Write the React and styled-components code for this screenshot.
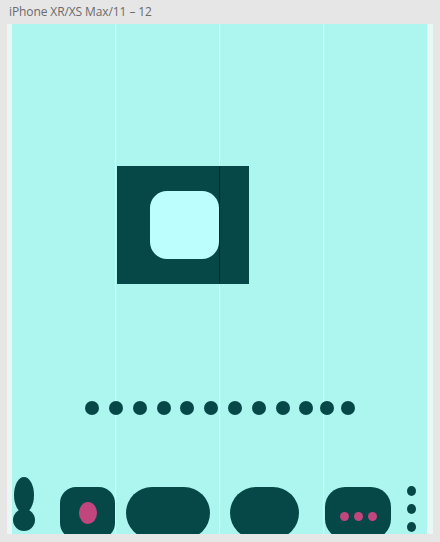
import React from 'react';
import styled, { createGlobalStyle } from 'styled-components';

const GlobalStyle = createGlobalStyle`
  html, body {
    margin: 0;
    padding: 0;
    background: #e6e6e6;
  }
  body {
    font-family: "Open Sans", "Noto Sans", sans-serif;
  }
`;

const DARK = '#064848';
const PINK = '#c1467d';

const Frame = styled.div`
  width: 440px;
  height: 542px;
  display: flex;
  flex-direction: column;
  background: #e6e6e6;
  overflow: hidden;
`;

const Title = styled.div`
  height: 24px;
  padding-left: 9px;
  font-size: 12px;
  line-height: 23px;
  color: #6b6b6b;
  letter-spacing: -0.1px;
`;

const Artboard = styled.div`
  margin: 0 7px;
  height: 510px;
  display: flex;
  background: #eaf7f5;
  padding: 0 6px 0 5px;
`;

const Canvas = styled.div`
  position: relative;
  flex: 1;
  background: #adf5ef;
  overflow: hidden;
  display: flex;
  flex-direction: column;
`;

const GridLine = styled.div`
  position: absolute;
  top: 0;
  bottom: 0;
  width: 1px;
  background: #e4fdfb;
  z-index: 0;
`;

const Layer = styled.div`
  position: relative;
  z-index: 1;
  display: flex;
  flex-direction: column;
`;

const Hero = styled.div`
  margin: 142px 0 0 105px;
  width: 132px;
  height: 118px;
  background: ${DARK};
  display: flex;
`;

const HeroLeft = styled.div`
  width: 102px;
  display: flex;
  align-items: center;
  justify-content: flex-end;
`;

const HeroDivider = styled.div`
  width: 1px;
  background: #0b1f1f;
`;

const Tile = styled.div`
  width: 69px;
  height: 68px;
  border-radius: 17px;
  background: #bcfdfd;
`;

const DotRow = styled.div`
  margin: 117px 0 0 63px;
  display: flex;
`;

const Dot = styled.div`
  width: 14px;
  height: 14px;
  margin-left: ${(p) => p.$gap}px;
  border-radius: 50%;
  background: ${DARK};
`;

const BottomBar = styled.div`
  margin-top: 62px;
  display: flex;
  align-items: flex-start;
`;

const Slot = styled.div`
  margin-left: ${(p) => p.$left}px;
  margin-top: ${(p) => p.$top || 0}px;
`;

const Stack = styled.div`
  display: flex;
  flex-direction: column;
  align-items: center;
  width: 22px;
`;

const Oval = styled.div`
  width: ${(p) => p.$w}px;
  height: ${(p) => p.$h}px;
  border-radius: 50%;
  background: ${(p) => p.$color || DARK};
  margin-top: ${(p) => p.$top || 0}px;
`;

const Block = styled.div`
  width: ${(p) => p.$w}px;
  height: 52px;
  border-radius: ${(p) => p.$radius}px;
  background: ${DARK};
  display: flex;
  justify-content: center;
  align-items: ${(p) => (p.$low ? 'flex-start' : 'center')};
  padding-top: ${(p) => (p.$low ? 25 : 0)}px;
  box-sizing: border-box;
  gap: 5px;
`;

const VDots = styled.div`
  display: flex;
  flex-direction: column;
  gap: 8px;
`;

const dotGaps = [10, 10, 10, 9.5, 9.5, 10, 10, 10, 9.5, 9.5, 6.5, 7];

export default function App() {
  return (
    <Frame>
      <GlobalStyle />
      <Title>iPhone XR/XS Max/11 – 12</Title>
      <Artboard>
        <Canvas>
          <GridLine style={{ left: 103 }} />
          <GridLine style={{ left: 207 }} />
          <GridLine style={{ left: 311 }} />
          <Layer>
            <Hero>
              <HeroLeft>
                <Tile />
              </HeroLeft>
              <HeroDivider />
            </Hero>
            <DotRow>
              {dotGaps.map((g, i) => (
                <Dot key={i} $gap={g} />
              ))}
            </DotRow>
            <BottomBar>
              <Slot $left={1}>
                <Stack>
                  <Oval $w={20} $h={36} />
                  <Oval $w={22} $h={22} $top={-4} />
                </Stack>
              </Slot>
              <Slot $left={25} $top={10}>
                <Block $w={55} $radius={16}>
                  <Oval $w={18} $h={22} $color={PINK} />
                </Block>
              </Slot>
              <Slot $left={11} $top={10}>
                <Block $w={84} $radius={26} />
              </Slot>
              <Slot $left={20} $top={10}>
                <Block $w={69} $radius={26} />
              </Slot>
              <Slot $left={26} $top={10}>
                <Block $w={66} $radius={20} $low>
                  <Oval $w={9} $h={9} $color={PINK} />
                  <Oval $w={9} $h={9} $color={PINK} />
                  <Oval $w={9} $h={9} $color={PINK} />
                </Block>
              </Slot>
              <Slot $left={16} $top={9}>
                <VDots>
                  <Oval $w={9} $h={10} />
                  <Oval $w={9} $h={10} />
                  <Oval $w={9} $h={10} />
                </VDots>
              </Slot>
            </BottomBar>
          </Layer>
        </Canvas>
      </Artboard>
    </Frame>
  );
}
